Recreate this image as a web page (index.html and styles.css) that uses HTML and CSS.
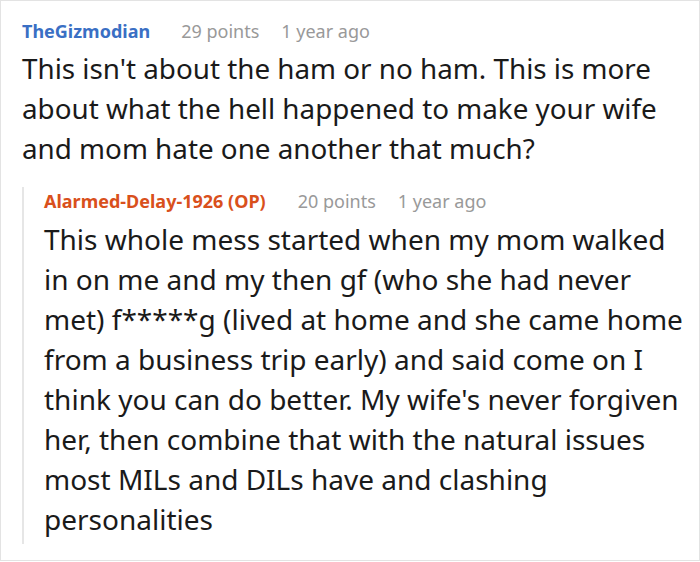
FILE: index.html
```html
<!DOCTYPE html>
<html>
<head>
<meta charset="utf-8">
<link rel="stylesheet" href="styles.css">
</head>
<body>
<div class="thread">
  <div class="comment">
    <div class="meta">
      <span class="author">TheGizmodian</span>
      <span class="points">29 points</span>
      <span class="time">1 year ago</span>
    </div>
    <p class="text">This isn't about the ham or no ham. This is more about what the hell happened to make your wife and mom hate one another that much?</p>
    <div class="reply">
      <div class="meta">
        <span class="author op">Alarmed-Delay-1926 (OP)</span>
        <span class="points">20 points</span>
        <span class="time">1 year ago</span>
      </div>
      <p class="text">This whole mess started when my mom walked in on me and my then gf (who she had never met) f*****g (lived at home and she came home from a business trip early) and said come on I think you can do better. My wife's never forgiven her, then combine that with the natural issues most MILs and DILs have and clashing personalities</p>
    </div>
  </div>
</div>
</body>
</html>
```
FILE: styles.css
```css
html, body {
  margin: 0;
  padding: 0;
  background: #fff;
}
.thread {
  width: 700px;
  height: 561px;
  box-sizing: border-box;
  border: 1px solid #e3e3e3;
  overflow: hidden;
  font-family: "Noto Sans", sans-serif;
  color: #1a1a1a;
}
.comment {
  padding: 16px 0 0 21px;
}
.meta {
  display: flex;
  align-items: baseline;
  font-size: 18px;
  line-height: 28px;
  color: #999;
}
.author {
  font-weight: bold;
  color: #3a6fc4;
  margin-right: 31px;
}
.author.op {
  color: #d9501c;
  margin-right: 32px;
}
.points {
  margin-right: 22px;
}
.text {
  margin: 3px 0 0;
  font-size: 27.8px;
  line-height: 40px;
  color: #1a1a1a;
  padding-right: 8px;
}
.reply {
  margin-top: 33px;
  border-left: 2px solid #e6e6e6;
  padding-left: 20px;
  padding-bottom: 5px;
}
.reply .meta {
  margin-top: -14px;
}
.reply .text {
  margin-top: 4px;
  font-size: 28px;
  padding-right: 4px;
}
```
